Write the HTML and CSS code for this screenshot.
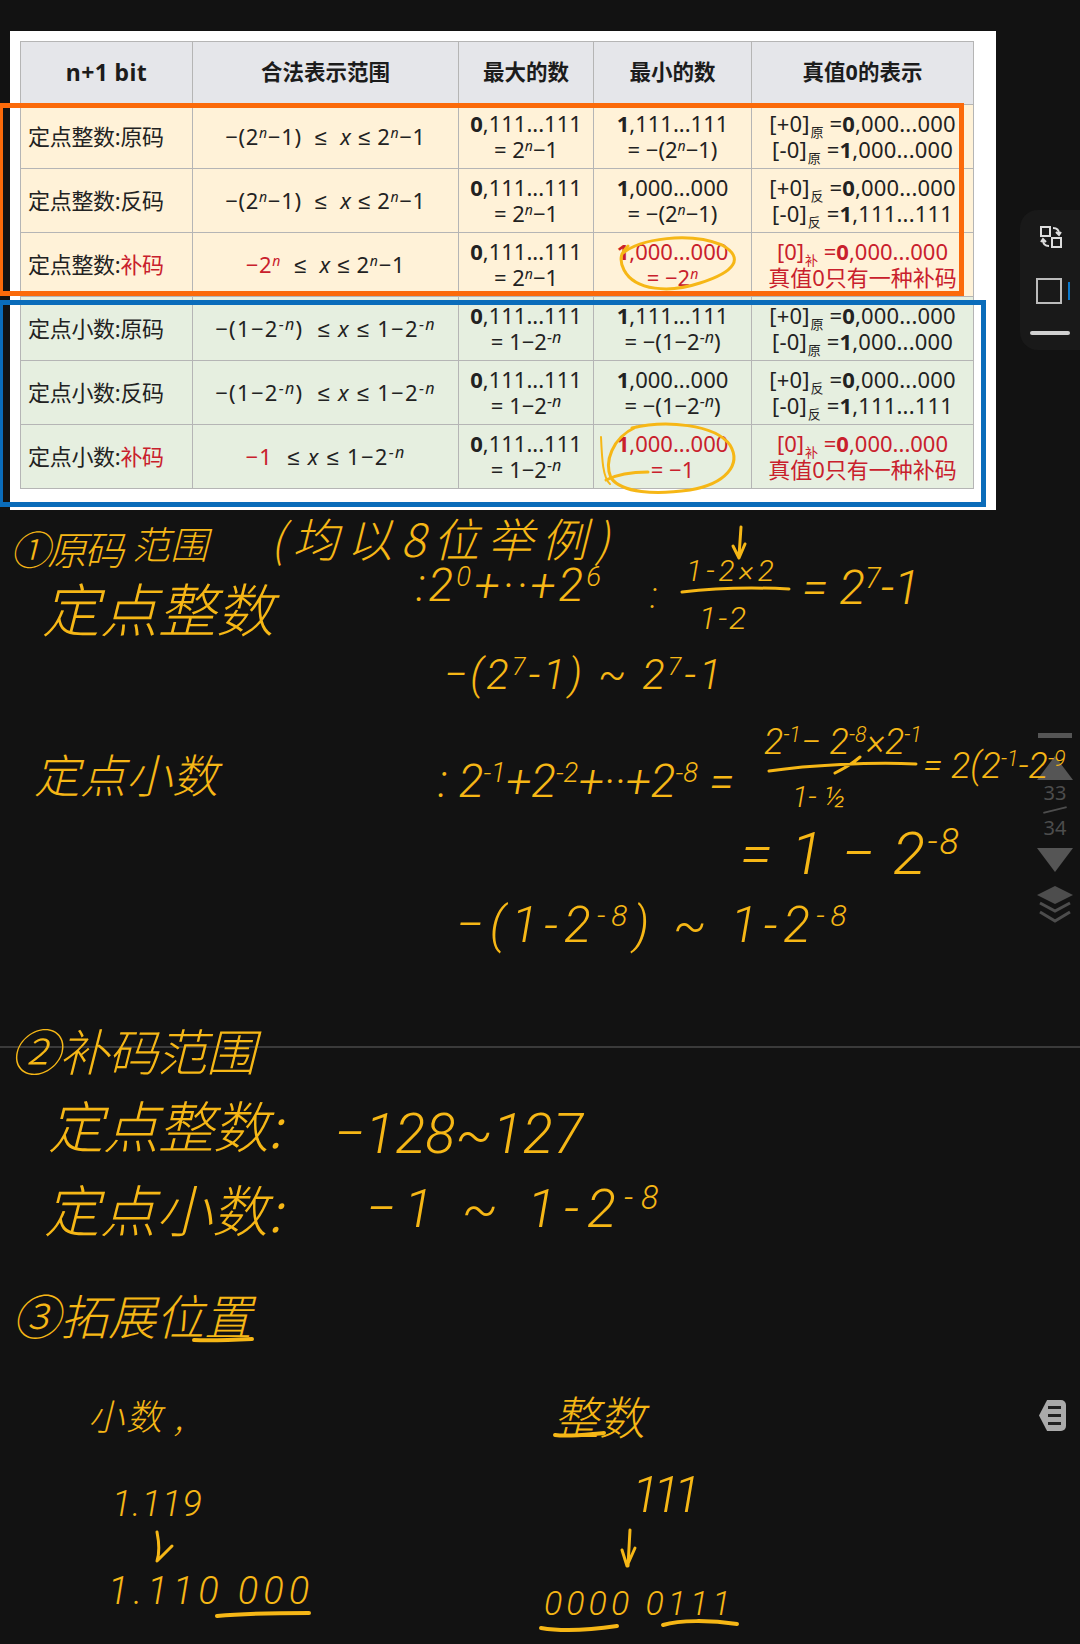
FILE: index.html
```html
<!DOCTYPE html>
<html lang="zh-CN">
<head>
<meta charset="utf-8">
<title>定点数表示范围</title>
<link rel="stylesheet" href="styles.css">
</head>
<body>
<main class="page">
  <section class="card">
    <table class="range">
      <colgroup><col class="c1"><col class="c2"><col class="c3"><col class="c4"><col class="c5"></colgroup>
      <thead>
        <tr><th class="latin">n+1 bit</th><th>合法表示范围</th><th>最大的数</th><th>最小的数</th><th>真值0的表示</th></tr>
      </thead>
      <tbody class="int">
        <tr>
          <td class="name">定点整数:原码</td>
          <td class="span">−(2<sup>n</sup>−1) &nbsp;≤ &nbsp;<i>x</i> ≤ 2<sup>n</sup>−1</td>
          <td><b>0</b>,111...111<br>= 2<sup>n</sup>−1</td>
          <td><b>1</b>,111...111<br>= −(2<sup>n</sup>−1)</td>
          <td class="zero">[+0]<sub>原</sub> =<b>0</b>,000...000<br>[-0]<sub>原</sub> =<b>1</b>,000...000</td>
        </tr>
        <tr>
          <td class="name">定点整数:反码</td>
          <td class="span">−(2<sup>n</sup>−1) &nbsp;≤ &nbsp;<i>x</i> ≤ 2<sup>n</sup>−1</td>
          <td><b>0</b>,111...111<br>= 2<sup>n</sup>−1</td>
          <td><b>1</b>,000...000<br>= −(2<sup>n</sup>−1)</td>
          <td class="zero">[+0]<sub>反</sub> =<b>0</b>,000...000<br>[-0]<sub>反</sub> =<b>1</b>,111...111</td>
        </tr>
        <tr>
          <td class="name">定点整数:<span class="red">补码</span></td>
          <td class="span"><span class="red">−2<sup>n</sup></span> &nbsp;≤ &nbsp;<i>x</i> ≤ 2<sup>n</sup>−1</td>
          <td><b>0</b>,111...111<br>= 2<sup>n</sup>−1</td>
          <td class="red"><b>1</b>,000...000<br>= −2<sup>n</sup></td>
          <td class="red">[0]<sub>补</sub> =<b>0</b>,000...000<br>真值0只有一种补码</td>
        </tr>
      </tbody>
      <tbody class="frac">
        <tr>
          <td class="name">定点小数:原码</td>
          <td class="span">−(1−2<sup>−n</sup>) &nbsp;≤ <i>x</i> ≤ 1−2<sup>−n</sup></td>
          <td><b>0</b>,111...111<br>= 1−2<sup>−n</sup></td>
          <td><b>1</b>,111...111<br>= −(1−2<sup>−n</sup>)</td>
          <td class="zero">[+0]<sub>原</sub> =<b>0</b>,000...000<br>[-0]<sub>原</sub> =<b>1</b>,000...000</td>
        </tr>
        <tr>
          <td class="name">定点小数:反码</td>
          <td class="span">−(1−2<sup>−n</sup>) &nbsp;≤ <i>x</i> ≤ 1−2<sup>−n</sup></td>
          <td><b>0</b>,111...111<br>= 1−2<sup>−n</sup></td>
          <td><b>1</b>,000...000<br>= −(1−2<sup>−n</sup>)</td>
          <td class="zero">[+0]<sub>反</sub> =<b>0</b>,000...000<br>[-0]<sub>反</sub> =<b>1</b>,111...111</td>
        </tr>
        <tr>
          <td class="name">定点小数:<span class="red">补码</span></td>
          <td class="span"><span class="red">−1</span> &nbsp;≤ <i>x</i> ≤ 1−2<sup>−n</sup></td>
          <td><b>0</b>,111...111<br>= 1−2<sup>−n</sup></td>
          <td class="red"><b>1</b>,000...000<br>= −1</td>
          <td class="red">[0]<sub>补</sub> =<b>0</b>,000...000<br>真值0只有一种补码</td>
        </tr>
      </tbody>
    </table>
  </section>

  <div class="box box-orange"></div>
  <div class="box box-blue"></div>
  <div class="divider"></div>

  <aside class="tools">
    <svg class="swap" viewBox="0 0 22 22" aria-hidden="true">
      <rect x="1" y="1" width="9" height="9"/><rect x="12" y="12" width="9" height="9"/>
      <path d="M13 2C17 2 19 4 19 8M16 6L19 9L21 6M9 20C5 20 3 18 3 14M1 16L3 13L6 16"/>
    </svg>
    <div class="frame"><span class="frame-square"></span><span class="frame-blue"></span></div>
    <span class="tool-bar"></span>
  </aside>

  <nav class="pager">
    <span class="first"></span>
    <span class="tri tri-up"></span>
    <span class="num">33</span>
    <span class="slash"></span>
    <span class="num">34</span>
    <span class="tri tri-down"></span>
    <svg class="layers" viewBox="0 0 36 38" aria-hidden="true">
      <path class="fill" d="M18 0L36 9L18 18L0 9Z"/>
      <path d="M3 17L18 25L33 17M3 26L18 35L33 26"/>
    </svg>
  </nav>

  <div class="note"><span></span><span></span><span></span></div>

  <div class="ink">
    <span class="h t1">①原码</span><span class="h t1b">范围</span>
    <span class="h t2">(均以8位举例)</span>
    <span class="h t3">定点整数</span>
    <span class="m t4">:2<sup>0</sup>+··+2<sup>6</sup></span>
    <span class="m t4b">:</span>
    <span class="m t5">1-2×2</span>
    <span class="m t6">1-2</span>
    <span class="m t7">= 2<sup>7</sup>-1</span>
    <span class="m t8">−(2<sup>7</sup>-1) ~ 2<sup>7</sup>-1</span>
    <span class="h t9">定点小数</span>
    <span class="m t10">: 2<sup>-1</sup>+2<sup>-2</sup>+··+2<sup>-8</sup> =</span>
    <span class="m t11">2<sup>-1</sup>− 2<sup>-8</sup>×2<sup>-1</sup></span>
    <span class="m t12">1- ½</span>
    <span class="m t13">= 2(2<sup>-1</sup>-2<sup>-9</sup></span>
    <span class="m t14">= 1 − 2<sup>-8</sup></span>
    <span class="m t15">−(1-2<sup>-8</sup>) ~ 1-2<sup>-8</sup></span>
    <span class="h t16">②补码范围</span>
    <span class="h t17">定点整数:</span>
    <span class="m t18">−128~127</span>
    <span class="h t19">定点小数:</span>
    <span class="m t20">−1 ~ 1-2<sup>-8</sup></span>
    <span class="h t21">③拓展位置</span>
    <span class="h t22">小数 ,</span>
    <span class="h t23">整数</span>
    <span class="m t24">1.119</span>
    <span class="m t25">1.110 000</span>
    <span class="m t26">111</span>
    <span class="m t27">0000 0111</span>
    <svg class="marks" viewBox="0 0 1080 1644" aria-hidden="true">
      <path d="M622 254C640 238 690 232 722 245C745 258 735 272 700 283C670 293 635 291 624 270C618 258 622 252 628 246"/>
      <path class="thin" d="M601 437C602 460 603 478 610 484"/>
      <path d="M632 428C665 420 715 424 730 445C742 465 725 484 690 490C655 495 622 493 611 478C604 462 612 438 636 427M606 480C618 474 630 472 648 472"/>
      <path d="M682 592C715 588 750 587 789 589"/>
      <path d="M769 771C810 765 870 762 916 764M835 773C845 768 852 764 860 757"/>
      <path d="M741 527L739 556M733 546L739 558L745 544"/>
      <path class="wide" d="M194 1340C212 1341 232 1340 252 1339"/>
      <path class="wide" d="M217 1616C250 1613 280 1613 309 1613"/>
      <path class="wide" d="M541 1628C565 1632 590 1630 617 1626"/>
      <path class="wide" d="M663 1625C680 1620 710 1620 737 1624"/>
      <path class="wide" d="M555 1435C570 1437 590 1434 604 1433"/>
      <path d="M157 1532C159 1542 160 1552 157 1561L172 1546"/>
      <path d="M630 1530L628 1566M622 1550L627 1566L635 1548"/>
    </svg>
  </div>
</main>
</body>
</html>
```

FILE: styles.css
```css
* { box-sizing: border-box; }
html, body { margin: 0; padding: 0; }
body { background: #121212; }

.page {
  position: relative;
  width: 1080px;
  height: 1644px;
  overflow: hidden;
  background: #121212;
  padding: 31px 0 0 10px;
}

/* table picture */
.card {
  width: 986px;
  height: 479px;
  background: #fff;
  padding: 10px 10px 0 10px;
}
.range {
  width: 953px;
  table-layout: fixed;
  border-collapse: collapse;
  font: 22px/26px "Noto Sans", "Liberation Sans", "Noto Sans CJK SC", sans-serif;
  color: #222;
  text-align: center;
}
.c1 { width: 172px; }
.c2 { width: 266px; }
.c3 { width: 135px; }
.c4 { width: 158px; }
.c5 { width: 222px; }
.range th, .range td {
  border: 1px solid #b5b5b5;
  padding: 0;
  white-space: nowrap;
}
.range th {
  height: 63px;
  padding-bottom: 3px;
  background: #e5e6ea;
  font-weight: 700;
  font-size: 21.5px;
  color: #1c1c1c;
}
.range .latin { font-size: 23px; letter-spacing: .4px; }
.range td { height: 64px; padding-bottom: 2px; }
.int td { background: #fff2d8; }
.frac td { background: #e6efe0; }
.range .name { text-align: left; padding-left: 7px; letter-spacing: -.3px; }
.int .span { letter-spacing: .7px; }
.frac .span { letter-spacing: 1.3px; }
.zero { letter-spacing: .15px; }
.range b { font-weight: 700; }
.range sup {
  font-size: 14px;
  font-style: italic;
  line-height: 0;
  vertical-align: 7px;
}
.frac sup { font-size: 16px; }
.range sub {
  font-size: 13px;
  line-height: 0;
  vertical-align: -5px;
  margin-left: 1px;
}
.range i { font-style: italic; }
.red { color: #c9202c; }

/* highlight boxes */
.box { position: absolute; border-style: solid; border-width: 5px; }
.box-orange { left: -2px; top: 103px; width: 966px; height: 193px; border-color: #fb6a0a; }
.box-blue { left: -2px; top: 300px; width: 988px; height: 207px; border-color: #0a6cba; }

.divider {
  position: absolute;
  left: 0;
  top: 1046px;
  width: 1080px;
  height: 2px;
  background: #3a3a3a;
}

/* handwriting layer */
.ink { position: absolute; inset: 0; color: #f6b716; }
.ink span { position: absolute; white-space: nowrap; line-height: 1; }
.h { font-family: "Noto Sans CJK SC", "Noto Sans", sans-serif; font-weight: 300; font-style: italic; }
.m { font-family: Roboto, "Noto Sans", sans-serif; font-weight: 300; font-style: italic; }
.m sup { font-size: .6em; line-height: 0; vertical-align: .55em; }
.marks {
  position: absolute;
  left: 0;
  top: 0;
  width: 1080px;
  height: 1644px;
  fill: none;
  stroke: #f6b716;
  stroke-width: 3;
  stroke-linecap: round;
  stroke-linejoin: round;
}
.marks .wide { stroke-width: 4; }
.marks .thin { stroke-width: 2; }

.t1 { left: 10px; top: 528px; font-size: 40px; letter-spacing: -3px; }
.t1b { left: 132px; top: 524px; font-size: 38px; }
.t2 { left: 270px; top: 514px; font-size: 46px; letter-spacing: 8px; }
.t3 { left: 42px; top: 578px; font-size: 58px; }
.t4 { left: 416px; top: 562px; font-size: 46px; letter-spacing: 3px; }
.t4b { left: 650px; top: 578px; font-size: 36px; }
.t5 { left: 686px; top: 556px; font-size: 30px; letter-spacing: 4px; }
.t6 { left: 699px; top: 602px; font-size: 32px; letter-spacing: 2px; }
.t7 { left: 802px; top: 564px; font-size: 48px; }
.t8 { left: 444px; top: 654px; font-size: 42px; letter-spacing: 3px; }
.t9 { left: 34px; top: 750px; font-size: 46px; }
.t10 { left: 438px; top: 758px; font-size: 46px; }
.t11 { left: 764px; top: 724px; font-size: 36px; }
.t12 { left: 792px; top: 782px; font-size: 30px; }
.t13 { left: 923px; top: 748px; font-size: 36px; }
.t14 { left: 740px; top: 824px; font-size: 60px; letter-spacing: 2px; }
.t15 { left: 456px; top: 900px; font-size: 50px; letter-spacing: 6px; }
.t16 { left: 10px; top: 1024px; font-size: 50px; letter-spacing: -1px; }
.t17 { left: 48px; top: 1096px; font-size: 56px; letter-spacing: -1px; }
.t18 { left: 334px; top: 1106px; font-size: 56px; }
.t19 { left: 44px; top: 1180px; font-size: 56px; }
.t20 { left: 366px; top: 1182px; font-size: 54px; letter-spacing: 8px; }
.t21 { left: 12px; top: 1290px; font-size: 48px; }
.t22 { left: 88px; top: 1396px; font-size: 36px; letter-spacing: 2px; }
.t23 { left: 553px; top: 1392px; font-size: 46px; }
.t24 { left: 112px; top: 1486px; font-size: 36px; letter-spacing: 1px; }
.t25 { left: 108px; top: 1572px; font-size: 38px; letter-spacing: 5px; }
.t26 { left: 632px; top: 1470px; font-size: 50px; letter-spacing: -6px; }
.t27 { left: 544px; top: 1586px; font-size: 34px; letter-spacing: 4px; }

/* right-hand tool panels */
.tools {
  position: absolute;
  left: 1020px;
  top: 210px;
  width: 70px;
  height: 140px;
  border-radius: 18px 0 0 18px;
  background: #191919;
  display: flex;
  flex-direction: column;
  align-items: flex-start;
  padding: 16px 0 0 10px;
}
.swap {
  width: 22px;
  height: 22px;
  margin-left: 10px;
  fill: none;
  stroke: #ddd;
  stroke-width: 2;
}
.frame { display: flex; align-items: center; gap: 6px; margin: 30px 0 0 6px; }
.frame-square { width: 26px; height: 26px; border: 2px solid #bbb; }
.frame-blue { width: 2px; height: 18px; background: #0a78cc; }
.tool-bar { width: 40px; height: 4px; border-radius: 2px; background: #d0d0d0; margin-top: 27px; }

.pager {
  position: absolute;
  left: 1036px;
  top: 733px;
  width: 38px;
  display: flex;
  flex-direction: column;
  align-items: center;
}
.first { width: 34px; height: 5px; background: #555; }
.tri { width: 36px; height: 24px; background: #555; }
.tri-up { margin-top: 18px; clip-path: polygon(50% 0, 100% 100%, 0 100%); }
.tri-down { margin-top: 9px; clip-path: polygon(0 0, 100% 0, 50% 100%); }
.num {
  font: 20px/22px "Noto Sans", sans-serif;
  color: #4d4d4d;
}
.tri-up + .num { margin-top: 2px; }
.slash { width: 24px; height: 2px; background: #4d4d4d; margin: 5px 0 6px; transform: rotate(-14deg); }
.layers {
  width: 36px;
  height: 38px;
  margin-top: 14px;
  fill: none;
  stroke: #4d4d4d;
  stroke-width: 3;
}
.layers .fill { fill: #4d4d4d; stroke: none; }

.note {
  position: absolute;
  left: 1039px;
  top: 1400px;
  width: 27px;
  height: 31px;
  background: #aaa;
  clip-path: polygon(30% 0, 100% 0, 100% 100%, 30% 100%, 0 50%);
  border-radius: 5px;
  display: flex;
  flex-direction: column;
  justify-content: center;
  align-items: flex-end;
  gap: 5px;
  padding-right: 5px;
}
.note span { width: 13px; height: 3px; background: #222; }
```
